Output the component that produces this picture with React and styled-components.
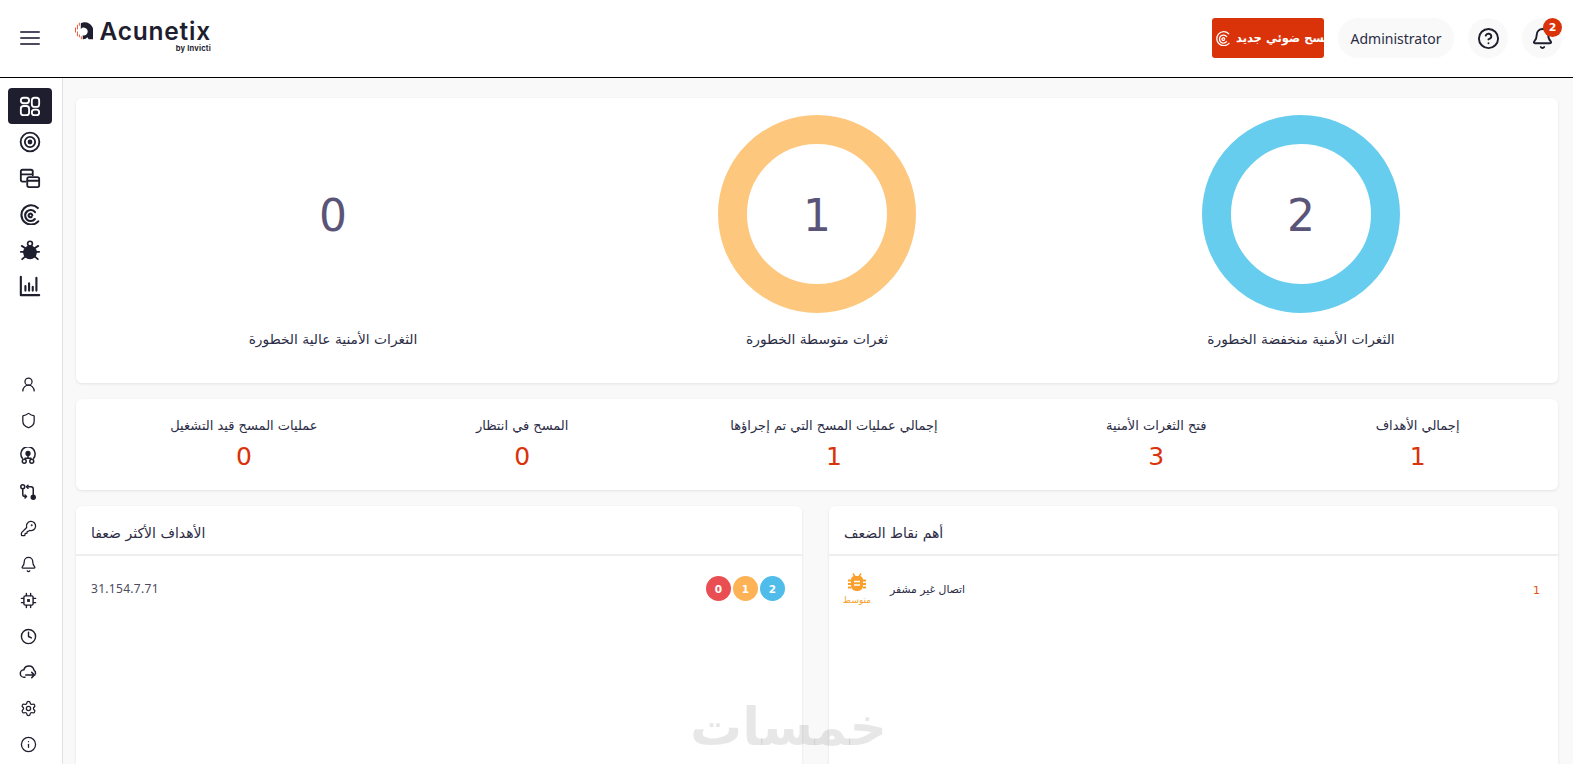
import React from "react";
import styled, { createGlobalStyle } from "styled-components";
import { UserRound, Shield, KeyRound, Bell, Clock, Settings, Info, CircleHelp } from "lucide-react";

const Global = createGlobalStyle`
  html, body { margin: 0; padding: 0; height: 100%; overflow: hidden; background: #fff; }
  body { font-family: "Noto Sans", "DejaVu Sans", sans-serif; color: #2b2c45; }
  * { box-sizing: border-box; }
`;
const Page = styled.div`height: 764px; display: flex; flex-direction: column; position: relative; overflow: hidden;`;
const Header = styled.header`
  height: 78px; flex: none; display: flex; align-items: center; border-bottom: 1px solid #000;
  background: #fff; padding: 0 11px 1px 20px;
`;
const Burger = styled.div`
  width: 20px; height: 14px; display: flex; flex-direction: column; justify-content: space-between; margin-right: 36px;
  & > i { display: block; height: 2px; background: #4d4a60; border-radius: 1px; }
`;
const Logo = styled.div`display: flex; flex-direction: column; width: 136px; margin-top: -3px; margin-left: -1px;`;
const LogoTop = styled.div`display: flex; align-items: center; gap: 6px; height: 24px;`;
const LogoWord = styled.span`font: 600 24.5px/24px Inter, sans-serif; color: #1e1e2e; letter-spacing: .8px;`;
const LogoSub = styled.span`font: 700 7.5px/10px Inter, sans-serif; color: #1e1e2e; align-self: flex-end; margin-top: 1px; letter-spacing: .2px;`;
const Spacer = styled.div`flex: 1;`;
const ScanButton = styled.div`
  width: 112px; height: 40px; background: #da3209; border-radius: 3px; display: flex; align-items: center;
  color: #fff; font: 700 11.5px "DejaVu Sans", sans-serif; padding-left: 3px; gap: 5px; white-space: nowrap; margin-right: 14px;
  & > svg { flex: none; }
`;
const Pill = styled.div`
  height: 40px; border-radius: 20px; background: #f9f9f9; display: flex; align-items: center; justify-content: center;
  font-size: 14px; color: #2b2c45; width: ${p => p.$w}px; margin-right: ${p => p.$mr || 0}px; position: relative;
`;
const Badge = styled.span`
  position: absolute; top: 0; right: 0; width: 19px; height: 19px; border-radius: 50%; background: #da3209; color: #fff;
  font: 700 11px "DejaVu Sans", sans-serif; display: flex; align-items: center; justify-content: center;
`;
const Body = styled.div`flex: 1; display: flex; min-height: 0;`;
const Sidebar = styled.nav`
  width: 63px; flex: none; border-right: 1px solid #e2e2e2; background: #fff; padding: 10px 0 0 8px; display: flex; flex-direction: column;
`;
const NavItem = styled.div`
  width: ${p => (p.$small ? 40 : 44)}px; height: 36px; display: flex; align-items: center; justify-content: center; border-radius: 4px; flex: none;
  color: ${p => (p.$active ? "#fff" : "#1e1e2e")}; background: ${p => (p.$active ? "#1e1e2e" : "transparent")};
`;
const NavGap = styled.div`height: 62px; flex: none;`;
const Main = styled.main`flex: 1; background: #f9f9f9; padding: 20px 15px 0 13px; display: flex; flex-direction: column; gap: 16px; min-width: 0;`;
const Card = styled.section`background: #fff; border-radius: 6px; box-shadow: 0 1px 3px rgba(0,0,0,.09);`;
const DonutCard = styled(Card)`height: 285px; flex: none; display: grid; grid-template-columns: repeat(3, 1fr); padding: 17px 15px 0;`;
const DonutCol = styled.div`display: flex; flex-direction: column; align-items: center;`;
const DonutWrap = styled.div`width: 198px; height: 198px; position: relative; display: flex; align-items: center; justify-content: center;`;
const DonutSvg = styled.svg`position: absolute; inset: 0;`;
const DonutValue = styled.span`font: 400 44px "DejaVu Sans", sans-serif; color: #5a5478; position: relative; top: 1px;`;
const DonutLabel = styled.div`font: 400 13.8px "DejaVu Sans", sans-serif; color: #2b2c45; margin-top: 18px;`;
const StatsCard = styled(Card)`height: 91px; flex: none; display: flex; justify-content: space-around; padding: 16px 15px 0;`;
const Stat = styled.div`display: flex; flex-direction: column; align-items: center; gap: 3px; width: ${p => p.$w}px; white-space: nowrap;`;
const StatLabel = styled.div`font: 400 13px/22px "DejaVu Sans", sans-serif; color: #2b2c45;`;
const StatValue = styled.div`font: 400 25px/34px "DejaVu Sans", sans-serif; color: #da3209;`;
const Columns = styled.div`display: grid; grid-template-columns: 726px 729px; gap: 27px; flex: 1; min-height: 0;`;
const Panel = styled(Card)`height: 400px; border-radius: 6px;`;
const PanelHead = styled.div`height: 50px; border-bottom: 2px solid #eeeeee; display: flex; align-items: center; padding: 5px 16px 0 15px; font: 400 14px "DejaVu Sans", sans-serif; color: #2b2c45;`;
const Row = styled.div`display: flex; align-items: center; padding: 20px 17px 0 15px;`;
const Address = styled.span`font-size: 12px; color: #4a4a60; letter-spacing: .3px; flex: 1;`;
const Dots = styled.div`display: flex; gap: 2px;`;
const Dot = styled.span`
  width: 25px; height: 25px; border-radius: 50%; background: ${p => p.$c}; color: #fff; font: 700 10.5px "DejaVu Sans", sans-serif;
  display: flex; align-items: center; justify-content: center;
`;
const Severity = styled.div`width: 30px; display: flex; flex-direction: column; align-items: center; margin: -3px 16px 0 -2px; color: #f9a02c;`;
const SeverityText = styled.span`font: 400 9px "DejaVu Sans", sans-serif; margin-top: 3px;`;
const VulnName = styled.span`flex: 1; font: 400 10.8px "DejaVu Sans", sans-serif; color: #2b2c45; margin-top: -3px; padding-left: 2px;`;
const Count = styled.span`font: 400 11px "DejaVu Sans", sans-serif; color: #e8500e; margin-right: 1px;`;
const Watermark = styled.div`
  position: absolute; left: 690px; top: 692px; font: 700 52px/70px "DejaVu Sans", sans-serif; color: rgba(0,0,0,.095); pointer-events: none; width: 192px; text-align: center;
`;

const Stroke = ({ size = 22, children, w = 2 }) => (
  <svg width={size} height={size} viewBox="0 0 24 24" fill="none" stroke="currentColor" strokeWidth={w} strokeLinecap="round" strokeLinejoin="round">{children}</svg>
);
const DashIcon = () => <Stroke><rect x="2" y="3" width="9" height="6" rx="3"/><rect x="14" y="3" width="8" height="10" rx="3"/><rect x="2" y="12" width="9" height="10" rx="3"/><rect x="14" y="16" width="8" height="6" rx="3"/></Stroke>;
const TargetIcon = () => <Stroke size={22}><circle cx="12" cy="12" r="10.2"/><circle cx="12" cy="12" r="5.6"/><circle cx="12" cy="12" r="1.6" fill="currentColor"/></Stroke>;
const WindowsIcon = () => <Stroke><path d="M7 16H4a2 2 0 0 1-2-2V5a2 2 0 0 1 2-2h9a2 2 0 0 1 2 2v4"/><path d="M2 8h12"/><rect x="9" y="11" width="13" height="11" rx="2"/><path d="M9 15h13"/></Stroke>;
const SwirlIcon = ({ size = 22, w = 2.3 }) => <Stroke size={size} w={w}><path d="M20.500 5.500A10.500 10.500 0 1 0 21 20"/><path d="M17.500 10a6 6 0 1 0 -0.2 7.500"/><path d="M14.500 13.500a2 2 0 1 0 -0.800 1.700"/></Stroke>;
const BugIcon = ({ size = 22 }) => (
  <svg width={size} height={size} viewBox="0 0 24 24" fill="currentColor" stroke="currentColor" strokeWidth="2" strokeLinecap="round">
    <ellipse cx="12" cy="14.500" rx="7.500" ry="7.500" stroke="none"/><circle cx="12" cy="5" r="2.600" fill="none" strokeWidth="1.800"/>
    <path d="M2 14h4M18 14h4M3 7.500l4 2.500M21 7.500l-4 2.500M3.500 22l3.500-3M20.500 22l-3.500-3" fill="none"/>
  </svg>
);
const ChartIcon = () => <Stroke w={2.3}><path d="M2 2v20h20"/><path d="M7 17v-5M11 17V9M15 17v-4M19 17V3"/></Stroke>;
const OrgIcon = () => (
  <Stroke size={18} w={2}><path d="M4.500 15a9.500 9.500 0 1 1 15 0"/><circle cx="12" cy="8.500" r="2.500" fill="currentColor"/><circle cx="7" cy="19" r="2.600"/><circle cx="17" cy="19" r="2.600"/><path d="M12 12v3M8 15h8"/></Stroke>
);
const FlowIcon = () => (
  <Stroke size={18} w={2}><circle cx="5" cy="5" r="2.600"/><circle cx="19" cy="19" r="2.600" fill="currentColor"/><path d="M5 8v7a3 3 0 0 0 3 3h1M12 5h4a3 3 0 0 1 3 3v8"/><path d="M12 3l-2 2 2 2M8 16l2 2-2 2"/></Stroke>
);
const CloudIcon = () => (
  <Stroke size={18} w={2}><path d="M8 19H7a5 5 0 0 1-.5-10A7 7 0 0 1 20 9.500a5 5 0 0 1 2 5"/><path d="M9 16h12M17 12.500L20.500 16 17 19.500"/></Stroke>
);
const ChipIcon = () => (
  <Stroke size={17} w={2}><rect x="5.500" y="5.500" width="13" height="13" rx="2"/><rect x="10" y="10" width="4" height="4" fill="currentColor" stroke="none"/><path d="M9 2v3M15 2v3M9 19v3M15 19v3M2 9h3M2 15h3M19 9h3M19 15h3"/></Stroke>
);
const MedBug = () => (
  <svg width="18" height="19" viewBox="0 0 18 19" fill="#f9a02c">
    <path d="M6 3h6a4 4 0 0 1 3 4v6a5 5 0 0 1-5 5H8a5 5 0 0 1-5-5V7a4 4 0 0 1 3-4z"/>
    <path d="M5 0.500l2 3M13 0.500l-2 3" stroke="#f9a02c" strokeWidth="1.500"/>
    <path d="M6 8.500h6M6 12h6" stroke="#fff" strokeWidth="1.500"/>
    <path d="M0 7.500h3M15 7.500h3M0 11h3M15 11h3M0 14.500h3M15 14.500h3" stroke="#f9a02c" strokeWidth="1.800"/>
  </svg>
);
const LogoMark = () => (
  <svg width="20" height="20" viewBox="0 0 19 19">
    <path d="M4 1h1v3H4zM2 3h1v5H2zM0 6h1v5H0zM2 10h1v5H2zM4 13h1v3H4zM6 15h1v3H6z" fill="#e8552e"/>
    <path d="M6 1.500A9 9 0 0 1 19 9v9h-5l-1-2a6 6 0 0 1-5 2v-4a4 4 0 1 0-2-6.500z" fill="#1e1e2e"/>
  </svg>
);
const Donut = ({ color, value }) => (
  <DonutWrap>
    {color && <DonutSvg viewBox="0 0 198 198"><circle cx="99" cy="99" r="84.500" fill="none" stroke={color} strokeWidth="29"/></DonutSvg>}
    <DonutValue>{value}</DonutValue>
  </DonutWrap>
);

const stats = [
  ["عمليات المسح قيد التشغيل", 0, 144],
  ["المسح في انتظار", 0, 89],
  ["إجمالي عمليات المسح التي تم إجراؤها", 1, 211],
  ["فتح الثغرات الأمنية", 3, 110],
  ["إجمالي الأهداف", 1, 89],
];
const donuts = [
  [null, 0, "الثغرات الأمنية عالية الخطورة"],
  ["#fdc77e", 1, "ثغرات متوسطة الخطورة"],
  ["#66cdee", 2, "الثغرات الأمنية منخفضة الخطورة"],
];
const topNav = [DashIcon, TargetIcon, WindowsIcon, SwirlIcon, BugIcon, ChartIcon];
const bottomNav = [
  () => <UserRound size={17} strokeWidth={1.8} />, () => <Shield size={17} strokeWidth={1.8} />, OrgIcon, FlowIcon,
  () => <KeyRound size={17} strokeWidth={1.8} />, () => <Bell size={17} strokeWidth={1.8} />, ChipIcon,
  () => <Clock size={17} strokeWidth={2} />, CloudIcon, () => <Settings size={17} strokeWidth={1.8} />, () => <Info size={17} strokeWidth={1.8} />,
];

export default function App() {
  return (
    <Page>
      <Global />
      <Header>
        <Burger><i /><i /><i /></Burger>
        <Logo>
          <LogoTop><LogoMark /><LogoWord>Acunetix</LogoWord></LogoTop>
          <LogoSub>by Invicti</LogoSub>
        </Logo>
        <Spacer />
        <ScanButton><SwirlIcon size={16} w={2} /><span>مسح ضوئي جديد</span></ScanButton>
        <Pill $w={116} $mr={14}>Administrator</Pill>
        <Pill $w={40} $mr={14}><CircleHelp size={23} strokeWidth={2} color="#1e1e2e" /></Pill>
        <Pill $w={40}><Bell size={23} strokeWidth={2} color="#1e1e2e" /><Badge>2</Badge></Pill>
      </Header>
      <Body>
        <Sidebar>
          {topNav.map((I, i) => <NavItem key={i} $active={i === 0}><I /></NavItem>)}
          <NavGap />
          {bottomNav.map((I, i) => <NavItem key={i} $small><I /></NavItem>)}
        </Sidebar>
        <Main>
          <DonutCard>
            {donuts.map(([c, v, l]) => (
              <DonutCol key={l}><Donut color={c} value={v} /><DonutLabel>{l}</DonutLabel></DonutCol>
            ))}
          </DonutCard>
          <StatsCard>
            {stats.map(([l, v, w]) => (
              <Stat key={l} $w={w}><StatLabel>{l}</StatLabel><StatValue>{v}</StatValue></Stat>
            ))}
          </StatsCard>
          <Columns>
            <Panel>
              <PanelHead>الأهداف الأكثر ضعفا</PanelHead>
              <Row>
                <Address>31.154.7.71</Address>
                <Dots><Dot $c="#e94f52">0</Dot><Dot $c="#fcb255">1</Dot><Dot $c="#4fbce9">2</Dot></Dots>
              </Row>
            </Panel>
            <Panel>
              <PanelHead>أهم نقاط الضعف</PanelHead>
              <Row>
                <Severity><MedBug /><SeverityText>متوسط</SeverityText></Severity>
                <VulnName>اتصال غير مشفر</VulnName>
                <Count>1</Count>
              </Row>
            </Panel>
          </Columns>
        </Main>
      </Body>
      <Watermark>خمسات</Watermark>
    </Page>
  );
}
